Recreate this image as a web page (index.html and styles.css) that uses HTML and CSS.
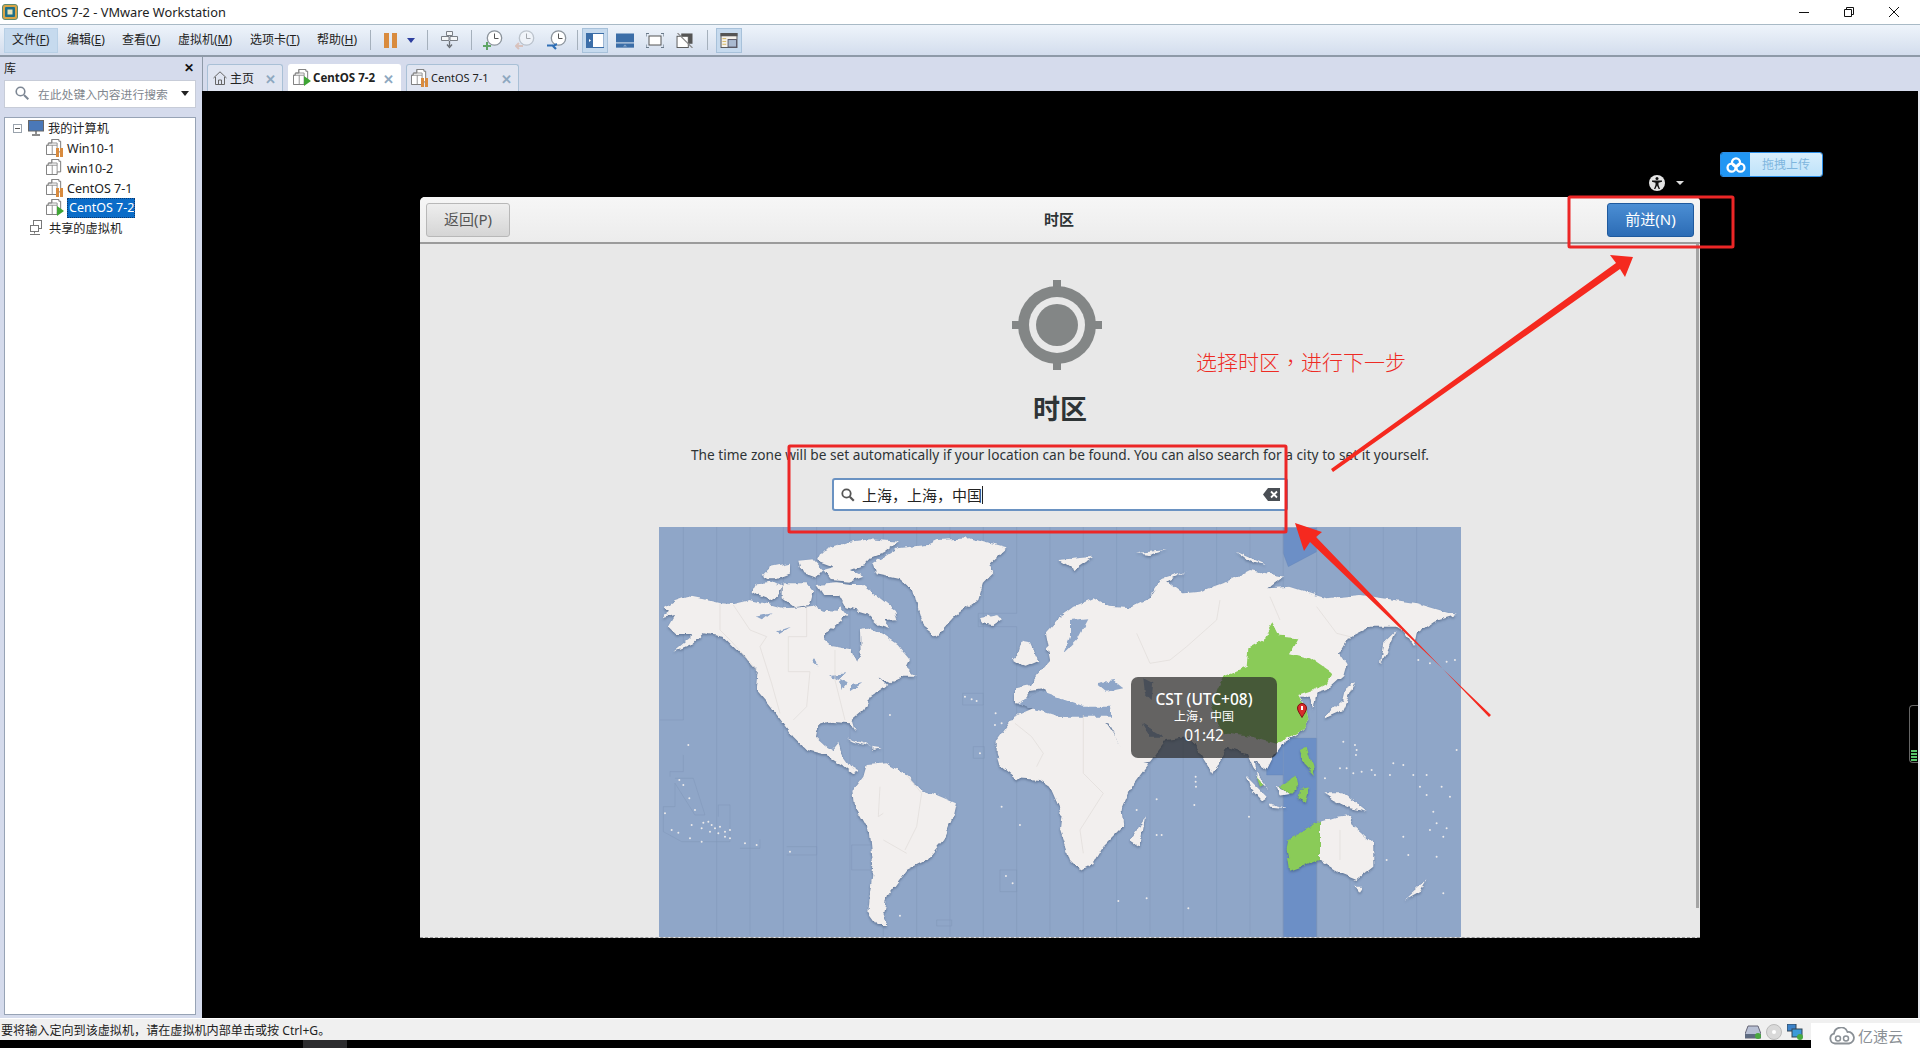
FILE: index.html
```html
<!DOCTYPE html>
<html lang="zh-CN">
<head>
<meta charset="utf-8">
<title>CentOS 7-2 - VMware Workstation</title>
<link rel="stylesheet" href="styles.css">
</head>
<body>
<svg class="defs" width="0" height="0" aria-hidden="true">
  <symbol id="vm" viewBox="0 0 18 18">
    <path d="M6.500 .5h8v2h2v12h-4v3H.5V7h2V4.500h4z" fill="#fff" stroke="#6b6b6b"/>
    <path d="M3 4.500h9.500v10M6.500 .5v4M.5 7h12M7 7v10" fill="none" stroke="#8b8b8b"/>
  </symbol>
  <symbol id="clock" viewBox="0 0 20 20">
    <circle cx="11.500" cy="8" r="7.200" fill="#fff" stroke="currentColor" stroke-width="1.300"/>
    <path d="M11.500 3.500V8.500H15.500" fill="none" stroke="#555" stroke-width="1"/>
  </symbol>
</svg>

<div class="app">
  <header class="titlebar">
    <svg class="app-logo" viewBox="0 0 16 16"><rect x=".5" y=".5" width="15" height="15" rx="2.500" fill="#d9a545" stroke="#5e8a70"/><rect x="3" y="3" width="10" height="10" rx="1" fill="#1f6f86"/><rect x="5.500" y="5.500" width="5" height="5" fill="#e9e4b8"/></svg>
    <span class="title-text">CentOS 7-2 - VMware Workstation</span>
    <div class="window-controls">
      <svg class="wc" viewBox="0 0 12 12"><path d="M1 6.500h10" stroke="#111" stroke-width="1"/></svg>
      <svg class="wc" viewBox="0 0 12 12"><path d="M1.500 3.500h7v7h-7zM3.500 3.500v-2h7v7h-2" fill="none" stroke="#111"/></svg>
      <svg class="wc" viewBox="0 0 12 12"><path d="M1 1l10 10M11 1L1 11" stroke="#111" stroke-width="1"/></svg>
    </div>
  </header>

  <nav class="toolbar">
    <span class="menu menu-active">文件(<u>F</u>)</span>
    <span class="menu">编辑(<u>E</u>)</span>
    <span class="menu">查看(<u>V</u>)</span>
    <span class="menu">虚拟机(<u>M</u>)</span>
    <span class="menu">选项卡(<u>T</u>)</span>
    <span class="menu">帮助(<u>H</u>)</span>
    <i class="tsep tsep-a"></i>
    <span class="pause"><b></b><b></b></span>
    <i class="caret"></i>
    <i class="tsep tsep-b"></i>
    <svg class="tool tool-send" viewBox="0 0 17 18"><path d="M5.500 .5h6v4h-6zM.5 5.500h7.500v4H.5zM9 5.500h7.500v4H9z" fill="#f4f6f8" stroke="#7a7f86"/><path d="M8.500 10v5M6 13.500l2.500 3 2.500-3" fill="none" stroke="#6a6f76" stroke-width="1.300"/></svg>
    <i class="tsep tsep-c"></i>
    <span class="tool-clock"><svg class="clk"><use href="#clock"/></svg><svg class="badge" viewBox="0 0 8 8"><path d="M4 0v8M0 4h8" stroke="#5fa565" stroke-width="2"/></svg></span>
    <span class="tool-clock clock-dim"><svg class="clk"><use href="#clock"/></svg><svg class="badge" viewBox="0 0 8 8"><path d="M8 4H2M4 1L1 4l3 3" fill="none" stroke="#d59a80" stroke-width="2"/></svg></span>
    <span class="tool-clock"><svg class="clk"><use href="#clock"/></svg><svg class="badge badge-w" viewBox="0 0 10 8"><path d="M0 3.500h6M6 4l4-2M6 4l3 3" fill="none" stroke="#2f6fb5" stroke-width="2.200"/></svg></span>
    <i class="tsep tsep-d"></i>
    <span class="view-btn view-active"><svg viewBox="0 0 18 14"><rect width="18" height="14" fill="#fff" stroke="#3c6ea8"/><rect width="7" height="14" fill="#3c6ea8"/><path d="M3 5.500l2 1.500-2 1.500z" fill="#fff"/></svg></span>
    <span class="view-btn"><svg viewBox="0 0 18 14"><rect width="18" height="14" fill="#3c6ea8"/><rect y="9" width="18" height="1" fill="#fff"/><path d="M7 13l2-2 2 2z" fill="#fff"/><rect y="10" width="18" height="4" fill="#3c6ea8" opacity=".6"/></svg></span>
    <span class="view-btn"><svg viewBox="0 0 18 14"><rect x="3" y="2.500" width="12" height="9" fill="#fff" stroke="#555"/><path d="M0 3V0h3M15 0h3v3M18 11v3h-3M3 14H0v-3" fill="none" stroke="#6a7a8a" stroke-width="1.200"/></svg></span>
    <span class="view-btn"><svg viewBox="0 0 18 16"><rect x="5" y=".5" width="12" height="11" fill="#555"/><rect x=".5" y="3.500" width="12" height="12" fill="#fff" stroke="#555"/><path d="M1 0l16 16" stroke="#888" stroke-width="1.200"/></svg></span>
    <i class="tsep tsep-e"></i>
    <span class="view-btn view-active view-last"><svg viewBox="0 0 18 16"><rect x=".5" y=".5" width="17" height="15" fill="#f4f2ec" stroke="#555"/><rect width="18" height="3.500" fill="#555"/><rect x="8" y="7" width="9" height="8" fill="#a9bad0" stroke="#556"/><path d="M2 6h4M2 9h4M2 12h4" stroke="#d4b45a"/></svg></span>
  </nav>

  <div class="workspace">
    <aside class="library">
      <div class="lib-head"><span>库</span><span class="lib-close">✕</span></div>
      <div class="lib-search">
        <svg class="lib-glass" viewBox="0 0 14 14"><circle cx="5.500" cy="5.500" r="4.300" fill="none" stroke="#7d8794" stroke-width="1.600"/><path d="M9 9l4.300 4.300" stroke="#7d8794" stroke-width="2"/></svg>
        <span class="lib-placeholder">在此处键入内容进行搜索</span>
        <i class="lib-caret"></i>
      </div>
      <ul class="tree">
        <li class="tree-row tree-root">
          <i class="expander"></i>
          <svg class="pc" viewBox="0 0 16 16"><rect x=".5" y=".5" width="15" height="10.500" fill="#4a78b8" stroke="#666"/><path d="M8 11v3M4 15h8" stroke="#666" stroke-width="1.400"/></svg>
          <span>我的计算机</span>
        </li>
        <li class="tree-row tree-vm"><span class="vm-ico"><svg><use href="#vm"/></svg><span class="ov-pause"><b></b><b></b></span></span><span>Win10-1</span></li>
        <li class="tree-row tree-vm"><span class="vm-ico"><svg><use href="#vm"/></svg></span><span>win10-2</span></li>
        <li class="tree-row tree-vm"><span class="vm-ico"><svg><use href="#vm"/></svg><span class="ov-pause"><b></b><b></b></span></span><span>CentOS 7-1</span></li>
        <li class="tree-row tree-vm"><span class="vm-ico"><svg><use href="#vm"/></svg><i class="ov-play"></i></span><span class="selected">CentOS 7-2</span></li>
        <li class="tree-row tree-shared">
          <svg class="pc" viewBox="0 0 16 16"><rect x="4.500" y=".5" width="8" height="8" fill="#fff" stroke="#777"/><rect x="1.500" y="5.500" width="8" height="6" fill="#fff" stroke="#777"/><path d="M5.500 11.500v2M1 14.500h10" stroke="#777"/></svg>
          <span>共享的虚拟机</span>
        </li>
      </ul>
    </aside>

    <main class="main">
      <div class="tabs">
        <div class="tab tab-home">
          <svg class="home" viewBox="0 0 14 14"><path d="M.5 7L7 .8 13.500 7M2.500 6v7.500h9V6M5.500 13.500V9h3v4.500" fill="none" stroke="#666"/></svg>
          <span>主页</span><i class="tab-x">✕</i>
        </div>
        <div class="tab tab-active">
          <span class="vm-ico"><svg><use href="#vm"/></svg><i class="ov-play"></i></span>
          <span>CentOS 7-2</span><i class="tab-x">✕</i>
        </div>
        <div class="tab tab-other">
          <span class="vm-ico"><svg><use href="#vm"/></svg><span class="ov-pause"><b></b><b></b></span></span>
          <span>CentOS 7-1</span><i class="tab-x">✕</i>
        </div>
      </div>

      <div class="vm-screen">
        <div class="upload">
          <span class="upload-ico"><svg viewBox="0 0 22 18"><circle cx="11" cy="6" r="4.500" fill="none" stroke="#fff" stroke-width="2.600"/><circle cx="6" cy="12" r="4.500" fill="none" stroke="#fff" stroke-width="2.600"/><circle cx="16" cy="12" r="4.500" fill="none" stroke="#fff" stroke-width="2.600"/></svg></span>
          <span class="upload-text">拖拽上传</span>
        </div>
        <div class="a11y">
          <svg viewBox="0 0 16 16"><circle cx="8" cy="8" r="8" fill="#e4e4e4"/><circle cx="8" cy="3.600" r="1.500" fill="#111"/><path d="M3 5.500h10v1.300l-3.500 1V10l1.500 4H9.700L8 10.500 6.300 14H5l1.500-4V7.800L3 6.800z" fill="#111"/></svg>
          <i></i>
        </div>

        <section class="installer">
          <div class="inst-head">
            <button class="btn-back">返回(P)</button>
            <strong class="inst-title">时区</strong>
            <button class="btn-next">前进(N)</button>
          </div>
          <div class="inst-body">
            <svg class="target" viewBox="0 0 90 90">
              <path d="M41 0h8v12h-8zM41 78h8v12h-8zM0 41h12v8H0zM78 41h12v8H78z" fill="#838686"/>
              <circle cx="45" cy="45" r="39" fill="#838686"/>
              <circle cx="45" cy="45" r="28" fill="#e8e8e8"/>
              <circle cx="45" cy="45" r="21" fill="#838686"/>
            </svg>
            <h1 class="tz-heading">时区</h1>
            <p class="tz-desc">The time zone will be set automatically if your location can be found. You can also search for a city to set it yourself.</p>
            <div class="tz-input">
              <svg class="tz-glass" viewBox="0 0 14 14"><circle cx="5.500" cy="5.500" r="4.200" fill="none" stroke="#555" stroke-width="1.800"/><path d="M8.800 8.800l4 4" stroke="#555" stroke-width="2.200"/></svg>
              <span class="tz-value">上海，上海，中国</span><i class="tz-cursor"></i>
              <svg class="tz-clear" viewBox="0 0 17 13"><path d="M5 0h12v13H5L0 6.500z" fill="#4a4f55"/><path d="M8 3.500l6 6M14 3.500l-6 6" stroke="#fff" stroke-width="1.800"/></svg>
            </div>
            <div class="map-wrap">
              <svg class="map" viewBox="659 527 802 410" preserveAspectRatio="none">
                <defs>
                  <filter id="ls" filterUnits="userSpaceOnUse" x="659" y="527" width="802" height="410" color-interpolation-filters="sRGB">
                    <feTurbulence type="fractalNoise" baseFrequency=".1" numOctaves="3" seed="7" result="n"/>
                    <feDisplacementMap in="SourceGraphic" in2="n" scale="6" xChannelSelector="R" yChannelSelector="G" result="d"/>
                    <feDropShadow in="d" dx="0" dy="1.500" stdDeviation="1.200" flood-color="#2c4060" flood-opacity=".45"/>
                  </filter>
                </defs>
                <rect x="659" y="527" width="802" height="410" fill="#8fa6c8"/>
                <g transform="translate(1050 520) scale(.3333)">
                  <path d="M700 25H800V95L715 140 700 100zM700 1250V765L650 765 650 655H800V1250z" fill="#6c8fc6" stroke="#5d7fb3"/>
                </g>
                <g class="tz-lines" transform="translate(650 520) scale(.3333)">
                  <path d="M100 20V600H30M100 705V755H60V770M200 20V1250M300 20V1250M400 20V1250M500 20V1250M600 20V1250M700 20V1250M800 20V1250M900 20V1250M1000 20V1250M1100 20V280H985V320H1100V1250M1200 20V1250M1300 20V1250M1400 20V1250M1500 20V1250M1600 20V1250M1700 20V1250M1800 20V1250M1900 20V1250M2000 20V1250M2100 20V1250M2200 20V1250M2300 20V1250"/>
                  <path d="M75 775H130L165 885H135L75 790V860H40V935L95 965H240V855H205V890M270 985H330V958M410 980H500V1005H410M605 975H680V1050H605ZM1050 1050H1100V1115H1050ZM938 520H1000V555H938ZM970 680H1003V715H970ZM860 1200H905V1218H860Z"/>
                </g>
                <g filter="url(#ls)">
                  <g class="land" transform="translate(650 520) scale(.3333)">
                    <path d="M40 262L75 240 110 228 160 238 210 250 250 252 300 240 345 250 400 265 450 262 490 258 520 272 560 275 570 258 592 285 560 310 530 335 522 355 545 375 600 385 620 428 632 400 630 330 660 325 700 345 740 372 780 420 770 440 800 470 760 470 720 490 685 470 712 495 660 530 640 570 605 600 615 635 600 610 540 605 505 615 498 650 530 680 545 690 565 665 575 705 600 740 628 755 610 760 580 735 530 705 470 690 430 650 385 590 350 545 320 510 325 460 290 420 260 390 220 350 160 340 130 370 70 395 130 345 80 345 55 320 75 285 35 295 60 275Z"/>
                    <path d="M500 195L560 190 600 195 640 195 690 235 735 270 742 298 700 300 720 325 690 315 650 280 590 262 570 225 520 225ZM510 100L540 85 600 65 660 58 745 65 700 100 660 115 640 135 600 150 640 170 600 185 545 180 520 150 555 140 500 120ZM335 165L360 140 420 128 420 160 380 175 350 175ZM445 122L490 118 520 150 500 175 460 160 450 140ZM318 190L365 185 395 200 385 225 360 240 320 225 305 215ZM395 190L470 190 490 215 480 255 430 262 395 235Z"/>
                    <path d="M670 130L740 85 830 75 860 60 960 55 1070 85 1020 130 1030 160 1000 190 985 240 920 285 860 350 820 320 805 270 790 210 750 175 680 160Z"/>
                    <path d="M990 295L1040 285 1060 295 1030 315 1000 310ZM1085 420L1105 400 1115 365 1140 370 1165 425 1130 440 1100 430ZM590 655L640 670 660 680 610 665ZM665 680L695 685 675 690Z"/>
                    <path d="M650 735L710 730 770 765 815 810 860 825 918 850 910 885 880 960 830 1020 770 1050 740 1090 710 1130 700 1180 712 1215 680 1215 655 1180 660 1120 670 1040 660 940 615 860 610 810 640 770Z"/>
                  </g>
                  <g class="land" transform="translate(1050 520) scale(.3333)">
                    <path d="M-160 660L-110 590 -50 565 0 575 30 590 100 585 170 610 245 720 295 730 250 790 215 870 220 920 160 980 130 1030 90 1050 60 1020 30 930 35 880 0 800 -30 780 -100 775 -150 735 -160 700Z"/>
                    <path d="M-105 505L-60 495 -40 465 0 420 -15 340 30 290 70 260 130 235 180 260 240 265 300 235 340 175 400 220 450 215 520 190 600 150 700 170 655 205 720 200 830 235 930 225 1000 235 1100 250 1218 285 1150 305 1100 340 1092 378 1065 335 1040 320 960 320 900 350 870 400 890 430 880 465 830 510 800 520 790 572 780 530 750 530 770 570 775 600 760 630 700 670 670 710 650 750 615 725 620 775 655 808 610 745 590 700 530 680 490 765 450 700 420 650 350 660 300 725 245 732 175 610 110 605 60 575 30 555 10 570 -20 505 -60 510 -75 555 -105 550Z"/>
                    <path d="M820 590L880 540 890 500 915 490 880 570 825 595ZM990 430L1000 370 1040 330 1010 400ZM590 770L650 830 635 840 600 800ZM655 850L715 865 660 860ZM820 820L880 820 950 875 900 865 850 840ZM1065 1140L1130 1080 1110 1115ZM915 1100L940 1100 928 1118ZM240 960L285 895 270 980ZM25 120L130 110 70 150ZM300 225L330 180 410 155 340 190ZM255 100L350 90 300 105ZM560 95L650 135 600 125ZM680 800L700 810 720 825 690 830Z"/>
                    <path d="M810 905L860 890 900 885 915 920 970 970 970 1040 920 1080 870 1060 810 1020Z"/>
                  </g>
                  <g class="water" transform="translate(650 520) scale(.3333)">
                    <path d="M540 465L590 460 565 480ZM570 480L590 490 575 510ZM600 495L640 490 600 515ZM495 410L505 440 490 425ZM320 290L365 280 340 300ZM375 335L420 320 385 342Z"/>
                  </g>
                  <g class="water" transform="translate(1050 520) scale(.3333)">
                    <path d="M140 490L190 480 220 505 170 515ZM280 475L310 490 305 540 285 520ZM60 300L115 295 80 360 40 400 60 350ZM275 610L345 650 300 650ZM-100 550L-30 515 100 560 180 560 185 590 30 590 -20 575Z"/>
                  </g>
                  <g class="green" transform="translate(1050 520) scale(.3333)">
                    <path d="M520 470L590 440 595 385 640 360 670 310 690 350 745 355 720 400 780 415 845 460 830 490 790 510 745 525 770 570 775 600 760 630 680 672 600 650 520 640 480 560Z"/>
                    <path d="M715 960L810 905V1020L720 1052 710 985ZM750 690L770 680 795 765 760 730ZM690 800L740 765 745 800 720 825ZM620 770L640 795 630 800ZM750 810L775 805 765 845 745 835Z"/>
                  </g>
                </g>
                <g class="isles" transform="translate(650 520) scale(.3333)">
                  <path d="M115 675h0M88 780h0M100 795h0M118 835h0M135 870h0M45 880h0M125 915h0M160 908h0M175 905h0M185 915h0M195 925h0M210 920h0M225 935h0M240 930h0M155 925h0M180 935h0M205 940h0M225 950h0M240 955h0M65 930h0M85 938h0M120 955h0M155 965h0M285 970h0M320 975h0M420 995h0M720 585h0M1037 580h0M1035 615h0M1055 610h0M945 530h0M965 538h0M980 543h0M990 700h0M1055 860h0M1110 915h0M1068 1068h0M1088 1090h0M750 1187h0"/>
                </g>
                <g class="isles" transform="translate(1050 520) scale(.3333)">
                  <path d="M880 665h0M915 675h0M920 690h0M918 705h0M825 775h0M870 745h0M890 745h0M910 760h0M935 755h0M965 750h0M975 765h0M1020 765h0M1030 730h0M1060 735h0M1090 765h0M1130 765h0M1110 800h0M1130 825h0M1175 800h0M1200 830h0M1150 875h0M1160 910h0M1140 930h0M1190 925h0M1180 950h0M1160 1010h0M1075 1005h0M1010 1020h0M1060 950h0M320 838h0M260 870h0M320 945h0M335 945h0M433 855h0M437 770h0M437 785h0M438 800h0M597 890h0M290 1135h0M205 1143h0M415 1165h0M1180 1120h0M1220 690h0M1105 420h0M1140 430h0M1190 425h0M1215 420h0"/>
                </g>
                <g class="borders" transform="translate(650 520) scale(.3333)">
                  <path d="M210 250V330L245 365 320 450M250 255L300 330 350 350 330 380 365 490 390 580M470 260V350H415V455H480L470 560 430 600M555 390V480L585 600M690 800L685 890 700 880M770 765L815 820 800 920 765 990M700 960L770 1000M1095 610L1145 650 1180 700 1160 740"/>
                </g>
                <g class="borders" transform="translate(1050 520) scale(.3333)">
                  <path d="M100 585V760L160 820 90 930 100 1000M260 340L300 430 360 420 410 380 500 300 510 240M660 230L690 300M800 260L860 340 900 350M870 930V1020"/>
                </g>
              </svg>
              <div class="tz-tip">
                <div class="tip-zone">CST (UTC+08)</div>
                <div class="tip-city">上海，中国</div>
                <div class="tip-time">01:42</div>
              </div>
              <svg class="pin" viewBox="0 0 10 15"><path d="M5 14.500C2.500 10 .5 8 .5 5a4.500 4.500 0 0 1 9 0C9.500 8 7.500 10 5 14.500z" fill="#d92c2c" stroke="#7c1414"/><path d="M5 3v4" stroke="#fff" stroke-width="2"/></svg>
            </div>
            <i class="inst-scroll"></i>
          </div>
        </section>
        <div class="meter"><b></b><b></b><b></b><b></b></div>
      </div>
    </main>
  </div>

  <footer class="statusbar">
    <span>要将输入定向到该虚拟机，请在虚拟机内部单击或按 Ctrl+G。</span>
    <div class="status-icons">
      <svg viewBox="0 0 16 14"><path d="M3 1h10l3 8v4H0V9z" fill="#b8c0d4" stroke="#667"/><path d="M0 9h16v4H0z" fill="#5d6a80"/><circle cx="13" cy="11" r="3" fill="#49a83f"/></svg>
      <svg viewBox="0 0 16 16"><circle cx="8" cy="8" r="7.500" fill="#d9d9d9" stroke="#bbb"/><circle cx="8" cy="8" r="2" fill="#fff"/></svg>
      <svg viewBox="0 0 16 16"><rect x="0" y="0" width="9" height="7" fill="#3c82c8" stroke="#345"/><rect x="5" y="5" width="10" height="8" fill="#3c9ad8" stroke="#345"/><circle cx="13" cy="13" r="3" fill="#49a83f"/></svg>
    </div>
  </footer>
  <div class="footstrip"><i></i></div>
</div>

<div class="brand">
  <svg viewBox="0 0 26 18"><path d="M6 16.500a5 5 0 0 1-1-9.800A7 7 0 0 1 18.500 5 5.800 5.800 0 0 1 20 16.500H6z" fill="none" stroke="#8a9096" stroke-width="1.800"/><circle cx="9" cy="11.500" r="2.500" fill="none" stroke="#8a9096" stroke-width="1.500"/><circle cx="17" cy="11.500" r="2.500" fill="none" stroke="#8a9096" stroke-width="1.500"/></svg>
  <span>亿速云</span>
</div>

<svg class="marks" viewBox="0 0 1920 1048">
  <rect class="mark-box" x="1569" y="197" width="164" height="50" rx="1"/>
  <rect class="mark-box" x="789" y="446" width="497" height="86" rx="1"/>
  <path class="mark-arrow" d="M1331 469L1616 263 1610 255 1633 257 1625 277 1620 269 1333 472Z"/>
  <path class="mark-arrow" d="M1491 715L1310 542 1304 551 1295 523 1322 532 1316 537 1489 717Z"/>
</svg>
<div class="mark-text" lang="zh-TW">选择时区，进行下一步</div>
</body>
</html>
```

FILE: styles.css
```css
* { box-sizing: border-box; }
html, body { margin: 0; padding: 0; }
body {
  width: 1920px; height: 1048px; overflow: hidden; position: relative;
  background: #000; color: #222;
  font-family: "Noto Sans", "Noto Sans CJK SC", sans-serif; font-size: 12px;
}
.defs { position: absolute; }
.app { display: flex; flex-direction: column; height: 1048px; }

/* title bar */
.titlebar { height: 24px; background: #fff; display: flex; align-items: center; padding-left: 2px; flex: none; }
.app-logo { width: 16px; height: 16px; margin-right: 5px; }
.title-text { font-size: 12.800px; color: #222; white-space: nowrap; }
.window-controls { margin-left: auto; display: flex; align-items: center; margin-right: 20px; gap: 33px; }
.wc { width: 12px; height: 12px; display: block; }

/* toolbar */
.toolbar {
  height: 33px; flex: none; display: flex; align-items: center;
  background: linear-gradient(#eef4fb, #d3dded); border-top: 1px solid #a9bac6; border-bottom: 2px solid #8e9aa8;
  padding-left: 4px;
}
.menu { font-size: 12px; height: 25px; line-height: 24px; padding: 0 8px 0 8px; white-space: nowrap; color: #222; width: 54px; }
.menu:nth-child(2) { width: 55px; margin-left: 1px; padding-left: 8px; }
.menu:nth-child(3) { width: 56px; margin-left: 0; padding-left: 8px; }
.menu:nth-child(4) { width: 72px; }
.menu:nth-child(5) { width: 67px; }
.menu:nth-child(6) { width: 54px; }
.menu-active { background: #c6daee; border: 1px solid #b8d0e6; padding-left: 7px; line-height: 22px; }
.tsep { width: 1px; height: 20px; background: #a5b0bc; flex: none; }
.tsep-a { margin-left: 7px; }
.pause { display: flex; gap: 3px; margin-left: 13px; }
.pause b { width: 5px; height: 15px; background: #d98b3e; display: block; }
.caret { width: 0; height: 0; border: 4px solid transparent; border-top: 5px solid #2d3f9f; border-bottom: 0; margin-left: 10px; }
.tsep-b { margin-left: 12px; }
.tool { flex: none; }
.tool-send { width: 17px; height: 18px; margin-left: 13px; }
.tsep-c { margin-left: 13px; }
.tool-clock { width: 20px; height: 20px; position: relative; margin-left: 11px; flex: none; color: #8c949c; }
.tool-clock + .tool-clock { margin-left: 12px; }
.clk { width: 20px; height: 20px; display: block; }
.clock-dim { opacity: .45; }
.badge { position: absolute; left: 0; bottom: 0; width: 8px; height: 8px; }
.badge-w { width: 10px; }
.tsep-d { margin-left: 10px; }
.view-btn { width: 26px; height: 25px; display: flex; align-items: center; justify-content: center; margin-left: 4px; flex: none; border: 1px solid transparent; }
.view-btn svg { width: 18px; height: 15px; display: block; }
.view-btn + .view-btn { margin-left: 4px; }
.view-active { background: #c6daee; border-color: #a7c1da; }
.tsep-e { margin-left: 9px; }
.view-last { margin-left: 8px; }

/* workspace */
.workspace { flex: none; height: 961px; display: flex; background: #d5dbec; }
.library { width: 202px; flex: none; display: flex; flex-direction: column; padding: 0 6px 3px 4px; }
.lib-head { height: 23px; display: flex; justify-content: space-between; align-items: center; font-size: 12px; padding: 0 2px 2px 0; color: #222; }
.lib-close { font-size: 12px; color: #111; font-weight: 700; }
.lib-search { height: 28px; background: #fff; border: 1px solid #c7ccd8; display: flex; align-items: center; padding: 0 6px 2px 10px; }
.lib-glass { width: 14px; height: 14px; }
.lib-placeholder { font-size: 11.800px; color: #80868e; margin-left: 9px; white-space: nowrap; }
.lib-caret { width: 0; height: 0; border: 4px solid transparent; border-top: 5px solid #222; border-bottom: 0; margin-left: auto; }
.tree { list-style: none; margin: 9px 0 0; padding: 0; flex: 1; background: #fff; border: 1px solid #97a3b5; }
.tree-row { height: 20px; display: flex; align-items: center; font-size: 12.500px; white-space: nowrap; color: #222; }
.tree-root { padding-left: 8px; font-size: 12.200px; }
.expander { width: 9px; height: 9px; border: 1px solid #9aa3ad; position: relative; margin-right: 6px; }
.expander::after { content: ""; position: absolute; left: 1px; right: 1px; top: 3px; height: 1px; background: #555; }
.pc { width: 16px; height: 16px; margin-right: 4px; flex: none; }
.tree-vm { padding-left: 41px; }
.tree-vm .vm-ico { margin-right: 3px; }
.tree-shared { padding-left: 24px; font-size: 12.200px; }
.vm-ico { width: 18px; height: 18px; position: relative; flex: none; display: block; }
.vm-ico svg { width: 16px; height: 16px; display: block; }
.ov-pause { position: absolute; right: 1px; bottom: 0; display: flex; gap: 1px; }
.ov-pause b { width: 3px; height: 9px; background: #d98b3e; display: block; }
.ov-play { position: absolute; right: 0; bottom: 1px; width: 0; height: 0; border-left: 7px solid #3fa535; border-top: 5px solid transparent; border-bottom: 5px solid transparent; }
.selected { background: #0a6cc8; color: #fff; height: 20px; line-height: 19px; padding: 0 1px 0 2px; outline: 1px dotted #0b3a70; outline-offset: -1px; }

/* main */
.main { flex: 1; display: flex; flex-direction: column; min-width: 0; }
.tabs { height: 34px; flex: none; display: flex; align-items: flex-end; padding-left: 4px; gap: 5px; background: #d5dbec; border-left: 1px solid #8e9aa8; }
.tab { height: 27px; display: flex; align-items: center; font-size: 11px; padding: 0 0 1px 4px; background: #e0e5f1; border: 1px solid #a9c0d6; border-bottom: 0; border-radius: 3px 3px 0 0; position: relative; white-space: nowrap; }
.tab-x { position: absolute; right: 6px; top: 5px; font-style: normal; color: #8ea8c0; font-size: 13px; font-weight: 700; }
.tab-home { width: 76px; padding-left: 5px; font-size: 12px; }
.home { width: 14px; height: 14px; margin-right: 3px; }
.tab-active { width: 113px; background: #fff; border-color: #fff; font-weight: 700; font-size: 11.500px; }
.tab-active .vm-ico, .tab-other .vm-ico { margin-right: 2px; }
.tab-other { width: 113px; }

.vm-screen { flex: 1; background: #000; position: relative; border-right: 2px solid #e6e8ee; padding: 106px 0 0 218px; }
.upload { position: absolute; left: 1518px; top: 61px; width: 103px; height: 25px; display: flex; border-radius: 3px; overflow: hidden; border: 1px solid #2d8fe8; }
.upload-ico { width: 29px; background: #2196f3; display: flex; align-items: center; justify-content: center; }
.upload-ico svg { width: 20px; height: 16px; }
.upload-text { flex: 1; background: linear-gradient(#d8eefc, #bfe3fa); color: #7fb6de; font-size: 12px; text-align: center; line-height: 23px; }
.a11y { position: absolute; left: 1447px; top: 84px; display: flex; align-items: center; gap: 11px; }
.a11y svg { width: 16px; height: 16px; display: block; }
.a11y i { width: 0; height: 0; border: 4.500px solid transparent; border-top: 4.500px solid #ddd; border-bottom: 0; }

.installer { width: 1280px; height: 741px; background: #e8e8e8; border-radius: 5px 5px 0 0; display: flex; flex-direction: column; overflow: hidden; border-bottom: 1px dashed #9a9a9a; }
.inst-head { height: 47px; flex: none; display: flex; justify-content: space-between; align-items: flex-start; padding: 6px 6px 0 6px; background: linear-gradient(#f6f6f6, #ececec); border-bottom: 2px solid #9b9b9b; position: relative; }
.btn-back { width: 84px; height: 34px; font: 15px "Noto Sans", "Noto Sans CJK SC", sans-serif; color: #555; border: 1px solid #b8b8b8; border-radius: 3px; background: linear-gradient(#eeeeee, #d5d5d5); padding: 0 0 3px; }
.inst-title { position: absolute; left: 624px; top: 12px; font-size: 15px; color: #2e3436; line-height: 20px; }
.btn-next { width: 87px; height: 34px; font: 15px "Noto Sans", "Noto Sans CJK SC", sans-serif; color: #fff; border: 1px solid #1f5a9e; border-radius: 3px; background: linear-gradient(#4b8ed4, #2c6cb5); padding: 0 0 3px; }
.inst-body { flex: 1; display: flex; flex-direction: column; align-items: center; position: relative; padding: 36px 0 0; }
.target { width: 90px; height: 90px; flex: none; margin-left: -7px; }
.tz-heading { margin: 21px 0 0; font-size: 27px; line-height: 36px; font-weight: 700; color: #2e3436; }
.tz-desc { margin: 18px 0 0; font-size: 13.700px; line-height: 20px; color: #2e3436; white-space: nowrap; }
.tz-input { width: 456px; height: 33px; margin: 13px 0 0; background: #fff; border: 2px solid #6a92c2; border-radius: 3px; display: flex; align-items: center; padding: 0 6px 0 7px; flex: none; }
.tz-glass { width: 14px; height: 14px; flex: none; }
.tz-value { font-size: 15px; margin-left: 7px; color: #222; white-space: nowrap; }
.tz-cursor { width: 1px; height: 18px; background: #222; }
.tz-clear { width: 17px; height: 13px; margin-left: auto; }
.map-wrap { width: 802px; height: 410px; margin: 16px 0 0; position: relative; flex: none; }
.map { width: 802px; height: 410px; display: block; }
.tz-lines path { fill: none; stroke: #8098ba; stroke-width: 1.600; }
.land path { fill: #f2efee; }
.water path { fill: #8fa6c8; }
.green path { fill: #8acb58; }
.isles path { fill: none; stroke: #eceaea; stroke-width: 6; stroke-linecap: round; }
.borders path { fill: none; stroke: #dfdbd8; stroke-width: 2; }
.tz-tip { position: absolute; left: 472px; top: 150px; width: 146px; height: 81px; border-radius: 7px; background: rgba(45, 45, 45, .72); color: #fff; text-align: center; padding-top: 12px; }
.tip-zone { font-size: 15.500px; line-height: 20px; font-weight: 500; }
.tip-city { font-size: 12px; line-height: 16px; }
.tip-time { font-size: 15.500px; line-height: 20px; }
.pin { position: absolute; left: 638px; top: 176px; width: 10px; height: 15px; }
.inst-scroll { position: absolute; right: 1px; top: 0; height: 664px; width: 3px; background: #a4a4a4; }
.meter { position: absolute; right: 0; top: 614px; width: 9px; height: 58px; border: 1px solid #666; border-right: 0; border-radius: 4px 0 0 4px; display: flex; flex-direction: column; justify-content: flex-end; gap: 1px; padding: 0 1px 1px; }
.meter b { height: 2px; background: #57c46a; display: block; }

/* status */
.statusbar { height: 22px; flex: none; background: #f0f0f0; border-top: 1px solid #fff; display: flex; align-items: center; font-size: 12.100px; color: #222; white-space: nowrap; padding: 1px 0 0 1px; }
.status-icons { position: absolute; left: 1745px; top: 1024px; display: flex; gap: 5px; }
.status-icons svg { width: 16px; height: 16px; display: block; }
.footstrip { height: 8px; flex: none; background: #000; padding-left: 303px; }
.footstrip i { display: block; width: 44px; height: 8px; background: #2c2c2e; }
.brand { position: absolute; left: 1811px; top: 1023px; width: 109px; height: 25px; background: #fff; display: flex; align-items: center; padding-left: 18px; color: #8a9096; font-size: 15px; gap: 3px; white-space: nowrap; }
.brand svg { width: 26px; height: 18px; }

/* annotations */
.marks { position: absolute; left: 0; top: 0; width: 1920px; height: 1048px; pointer-events: none; }
.mark-box { fill: none; stroke: #ec2626; stroke-width: 3; }
.mark-arrow { fill: #f5291f; }
.mark-text { position: absolute; left: 1196px; top: 346px; font-size: 21px; line-height: 30px; color: #ee2b24; white-space: nowrap; font-family: "Noto Sans CJK TC", sans-serif; font-weight: 300; }
```
